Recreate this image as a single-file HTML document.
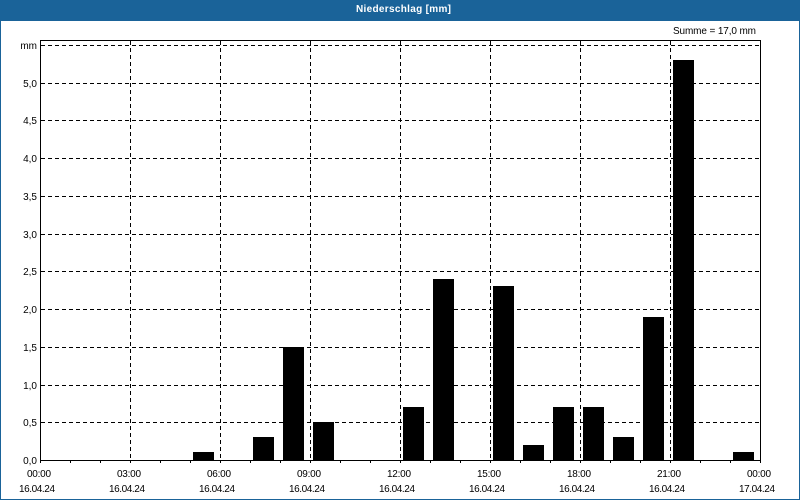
<!DOCTYPE html>
<html><head><meta charset="utf-8"><style>
html,body{margin:0;padding:0;background:#fff}
svg{display:block}
text{font-family:"Liberation Sans",sans-serif;font-size:10px;fill:#000}
.l{stroke:#000;stroke-width:1;fill:none}
.d{stroke-dasharray:4 3}
</style></head><body>
<svg width="800" height="500" viewBox="0 0 800 500" xmlns="http://www.w3.org/2000/svg">
<rect width="800" height="500" fill="#1a6399"/>
<rect x="1" y="21" width="798" height="478" fill="#fff"/>
<text x="356" y="12" style="font-weight:bold;fill:#fff" textLength="95" lengthAdjust="spacing">Niederschlag [mm]</text>
<text x="673" y="34" textLength="83" lengthAdjust="spacing">Summe = 17,0 mm</text>

<g class="l d">
<path d="M41 45.5H760M41 83.5H760M41 120.5H760M41 158.5H760M41 196.5H760M41 234.5H760M41 271.5H760M41 309.5H760M41 347.5H760M41 385.5H760M41 422.5H760"/>
<path d="M130.5 41V460M220.5 41V460M310.5 41V460M400.5 41V460M490.5 41V460M580.5 41V460M670.5 41V460"/>
</g>

<g fill="#000">
<rect x="193" y="452" width="21" height="8"/>
<rect x="253" y="437" width="21" height="23"/>
<rect x="283" y="347" width="21" height="113"/>
<rect x="313" y="422" width="21" height="38"/>
<rect x="403" y="407" width="21" height="53"/>
<rect x="433" y="279" width="21" height="181"/>
<rect x="493" y="286" width="21" height="174"/>
<rect x="523" y="445" width="21" height="15"/>
<rect x="553" y="407" width="21" height="53"/>
<rect x="583" y="407" width="21" height="53"/>
<rect x="613" y="437" width="21" height="23"/>
<rect x="643" y="317" width="21" height="143"/>
<rect x="673" y="60" width="21" height="400"/>
<rect x="733" y="452" width="21" height="8"/>
</g>

<g class="l">
<path d="M40.5 40.500H760.5V460.5H40.5Z"/>
<path d="M40.5 460V463M70.5 460V463M100.5 460V463M130.5 460V463M160.5 460V463M190.5 460V463M220.5 460V463M250.5 460V463M280.5 460V463M310.5 460V463M340.5 460V463M370.5 460V463M400.5 460V463M430.5 460V463M460.5 460V463M490.5 460V463M520.5 460V463M550.5 460V463M580.5 460V463M610.5 460V463M640.5 460V463M670.5 460V463M700.5 460V463M730.5 460V463M760.5 460V463"/>
</g>

<g text-anchor="end">
<text x="37" y="49">mm</text>
<text x="37" y="87">5,0</text>
<text x="37" y="124">4,5</text>
<text x="37" y="162">4,0</text>
<text x="37" y="200">3,5</text>
<text x="37" y="238">3,0</text>
<text x="37" y="275">2,5</text>
<text x="37" y="313">2,0</text>
<text x="37" y="351">1,5</text>
<text x="37" y="389">1,0</text>
<text x="37" y="426">0,5</text>
<text x="37" y="464">0,0</text>
</g>

<g>
<text x="27" y="477" textLength="24">00:00</text><text x="19" y="492" textLength="36">16.04.24</text>
<text x="117" y="477" textLength="24">03:00</text><text x="109" y="492" textLength="36">16.04.24</text>
<text x="207" y="477" textLength="24">06:00</text><text x="199" y="492" textLength="36">16.04.24</text>
<text x="297" y="477" textLength="24">09:00</text><text x="289" y="492" textLength="36">16.04.24</text>
<text x="387" y="477" textLength="24">12:00</text><text x="379" y="492" textLength="36">16.04.24</text>
<text x="477" y="477" textLength="24">15:00</text><text x="469" y="492" textLength="36">16.04.24</text>
<text x="567" y="477" textLength="24">18:00</text><text x="559" y="492" textLength="36">16.04.24</text>
<text x="657" y="477" textLength="24">21:00</text><text x="649" y="492" textLength="36">16.04.24</text>
<text x="747" y="477" textLength="24">00:00</text><text x="739" y="492" textLength="36">17.04.24</text>
</g>
</svg>
</body></html>
